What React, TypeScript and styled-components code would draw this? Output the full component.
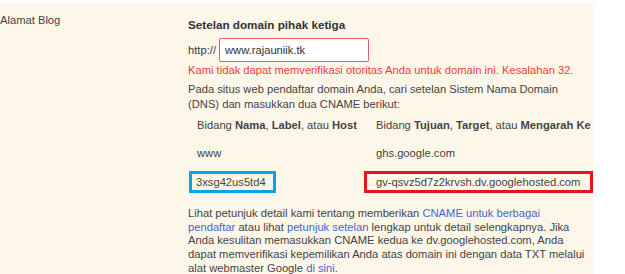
import React from "react";
import styled, { createGlobalStyle } from "styled-components";

const GlobalStyle = createGlobalStyle`
  html, body {
    margin: 0;
    padding: 0;
    background: #ffffff;
  }
  body {
    font-family: "Liberation Sans", Arial, sans-serif;
    color: #3a3a3a;
  }
`;

const Page = styled.div`
  width: 593px;
  height: 271px;
  margin-top: 3px;
  background: #fdf7e9;
  display: grid;
  grid-template-columns: 188px 1fr;
  font-size: 11.2px;
  overflow: hidden;
`;

const Label = styled.div`
  padding-top: 11px;
  color: #444;
`;

const Panel = styled.div`
  padding-top: 15px;
  display: flex;
  flex-direction: column;
`;

const Heading = styled.div`
  font-weight: bold;
  font-size: 11.7px;
  color: #333;
`;

const UrlRow = styled.div`
  display: flex;
  align-items: center;
  gap: 3px;
  margin-top: 7px;
`;

const UrlInput = styled.div`
  width: 143px;
  height: 22px;
  border: 1px solid #e35d63;
  border-radius: 2px;
  background: #fff;
  display: flex;
  align-items: center;
  padding-left: 5px;
  color: #333;
`;

const ErrorText = styled.div`
  color: #ee3b3b;
  margin-top: 1px;
  line-height: 15px;
  white-space: nowrap;
`;

const Para = styled.p<{ $top?: number; $lh?: number }>`
  margin: ${(p) => p.$top ?? 0}px 0 0;
  line-height: ${(p) => p.$lh ?? 15}px;
  color: #444;
  white-space: nowrap;
`;

const Link = styled.span`
  color: #3f66cf;
`;

const Table = styled.div`
  display: grid;
  grid-template-columns: 176px 1fr;
  grid-template-rows: 28px 28px 29px;
  margin-top: -1px;
  white-space: nowrap;
  align-items: center;
`;

const Cell = styled.div<{ $box?: string; $second?: boolean }>`
  justify-self: start;
  color: #444;
  ${(p) =>
    p.$box
      ? `border: 3px solid ${p.$box}; height: 22px; box-sizing: border-box; display: flex; align-items: center; padding: 0 ${
          p.$second ? "9px" : "7px 0 4px"
        }; margin-left: ${p.$second ? "0" : "1px"};${p.$second ? " width: 229px;" : ""}`
      : `padding-left: ${p.$second ? "12px" : "9px"};`}
`;

export default function App() {
  return (
    <>
      <GlobalStyle />
      <Page>
        <Label>Alamat Blog</Label>
        <Panel>
          <Heading>Setelan domain pihak ketiga</Heading>
          <UrlRow>
            <span>http://</span>
            <UrlInput>www.rajauniik.tk</UrlInput>
          </UrlRow>
          <ErrorText>
            Kami tidak dapat memverifikasi otoritas Anda untuk domain ini. Kesalahan 32.
          </ErrorText>
          <Para $top={4}>
            Pada situs web pendaftar domain Anda, cari setelan Sistem Nama Domain
            <br />
            (DNS) dan masukkan dua CNAME berikut:
          </Para>
          <Table>
            <Cell>
              Bidang <b>Nama</b>, <b>Label</b>, atau <b>Host</b>
            </Cell>
            <Cell $second>
              Bidang <b>Tujuan</b>, <b>Target</b>, atau <b>Mengarah Ke</b>
            </Cell>
            <Cell>www</Cell>
            <Cell $second>ghs.google.com</Cell>
            <Cell $box="#0ba3e6">3xsg42us5td4</Cell>
            <Cell $box="#e8141c" $second>
              gv-qsvz5d7z2krvsh.dv.googlehosted.com
            </Cell>
          </Table>
          <Para $top={11} $lh={13.7}>
            Lihat petunjuk detail kami tentang memberikan <Link>CNAME untuk berbagai</Link>
            <br />
            <Link>pendaftar</Link> atau lihat <Link>petunjuk setelan</Link> lengkap untuk detail selengkapnya. Jika
            <br />
            Anda kesulitan memasukkan CNAME kedua ke dv.googlehosted.com, Anda
            <br />
            dapat memverifikasi kepemilikan Anda atas domain ini dengan data TXT melalui
            <br />
            alat webmaster Google <Link>di sini</Link>.
          </Para>
        </Panel>
      </Page>
    </>
  );
}
